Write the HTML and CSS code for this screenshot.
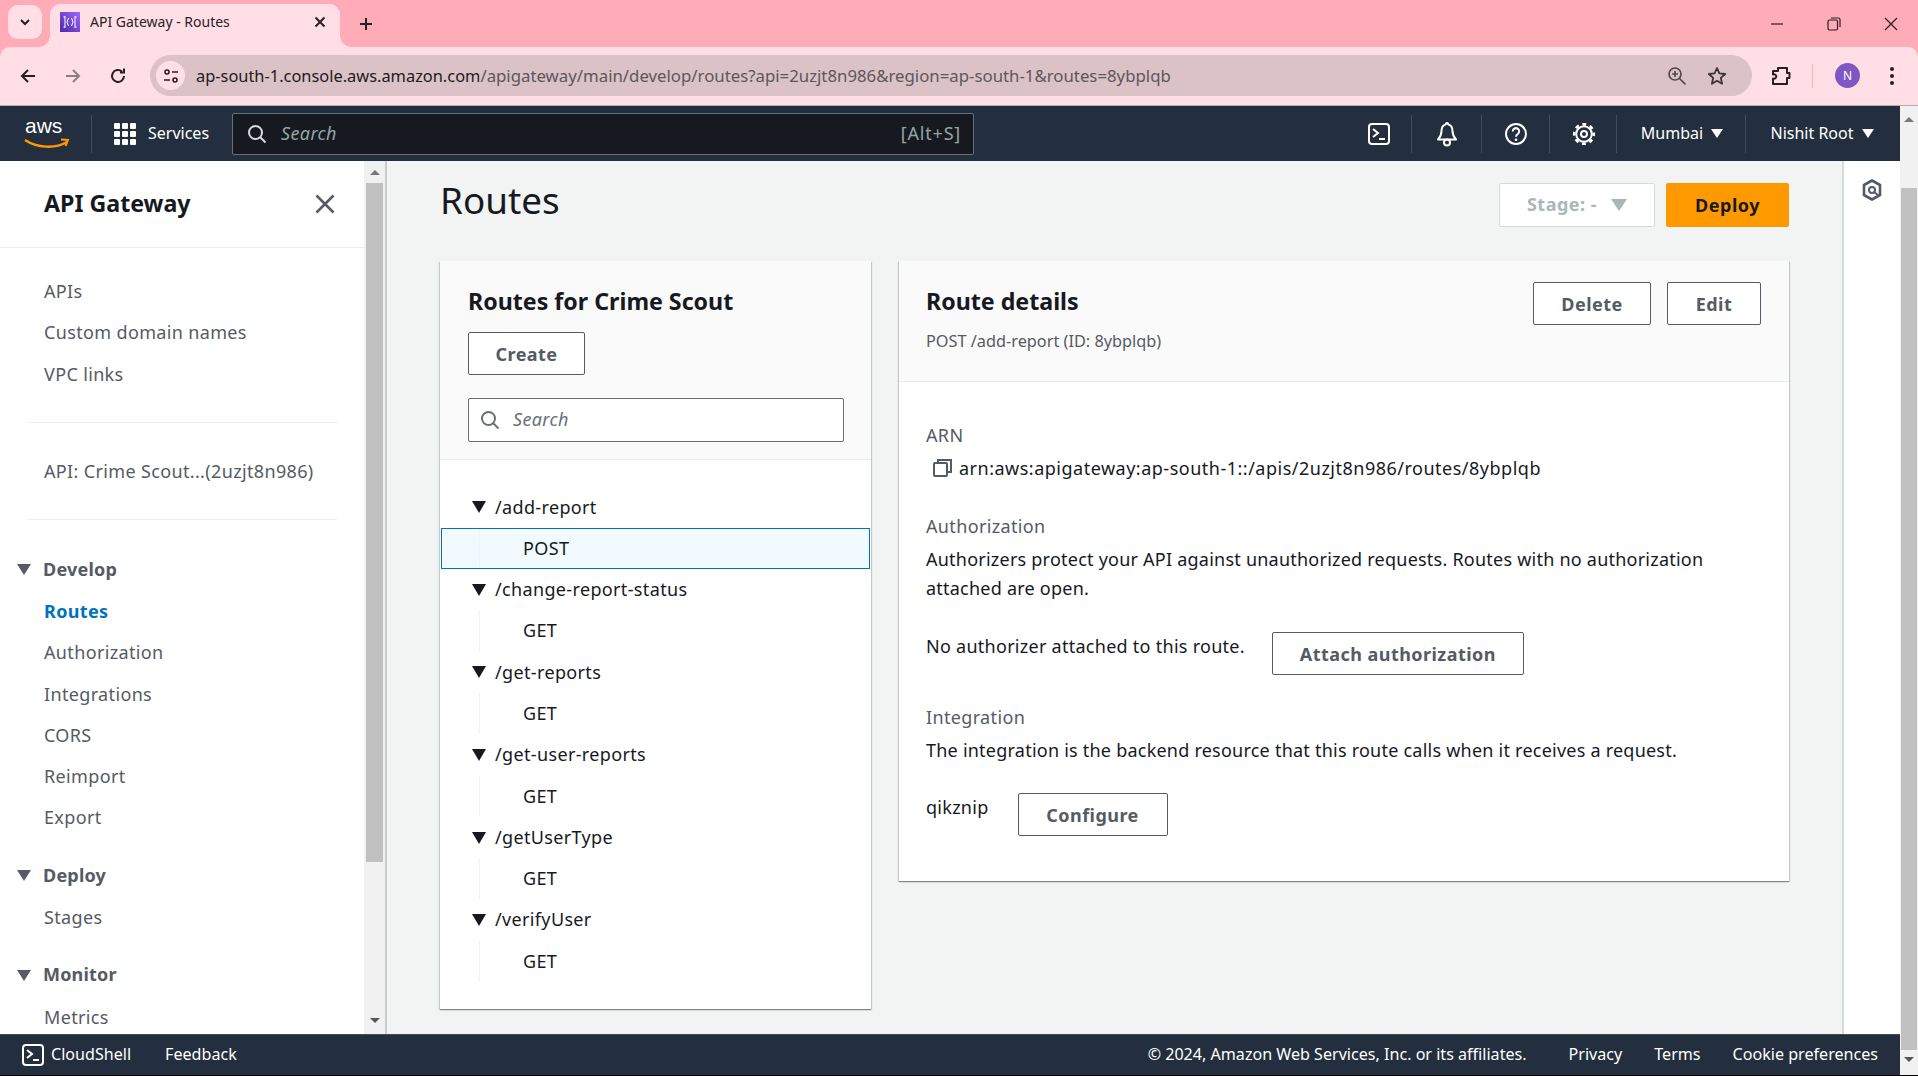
FILE: index.html
```html
<!DOCTYPE html>
<html lang="en">
<head>
  <meta charset="UTF-8" />
  <title>API Gateway - Routes</title>
  <link rel="stylesheet" href="styles.css">
</head>
<body>
  <!-- browser tabs -->
  <div class="tabstrip">
    <div class="tab-list-btn">
      <svg width="14" height="14" viewBox="0 0 14 14"><path d="M3 5l4 4 4-4" fill="none" stroke="#222" stroke-width="2"/></svg>
    </div>
    <div class="tab">
      <svg class="favicon" width="20" height="20" viewBox="0 0 20 20">
        <defs><linearGradient id="fav" x1="0" y1="1" x2="1" y2="0"><stop offset="0" stop-color="#4d27a8"/><stop offset="1" stop-color="#a166ff"/></linearGradient></defs>
        <rect width="20" height="20" fill="url(#fav)"/>
        <path d="M5 4v12M15 4v12M3.500 5h1.500M3.500 15h1.500M15 5h1.500M15 15h1.500M8.500 6l-1.500 4 1.500 4M11.500 6l1.500 4-1.500 4" fill="none" stroke="#fff" stroke-width="1"/>
      </svg>
      <span class="tab-title">API Gateway - Routes</span>
      <svg class="tab-close" width="12" height="12" viewBox="0 0 12 12"><path d="M1.500 1.500l9 9M10.500 1.500l-9 9" stroke="#222" stroke-width="2"/></svg>
    </div>
    <svg class="new-tab" width="14" height="14" viewBox="0 0 14 14"><path d="M7 1v12M1 7h12" stroke="#222" stroke-width="2"/></svg>
    <div class="window-btns">
      <svg width="14" height="14" viewBox="0 0 14 14"><path d="M1 7h12" stroke="#222" stroke-width="1.200"/></svg>
      <svg width="14" height="14" viewBox="0 0 14 14"><rect x="1" y="3" width="9.500" height="10" rx="1.500" fill="none" stroke="#222" stroke-width="1.200"/><path d="M4 1h7.500a1.500 1.500 0 0 1 1.500 1.500V10" fill="none" stroke="#222" stroke-width="1.200"/></svg>
      <svg width="14" height="14" viewBox="0 0 14 14"><path d="M1 1l12 12M13 1L1 13" stroke="#222" stroke-width="1.200"/></svg>
    </div>
  </div>

  <!-- browser toolbar -->
  <div class="toolbar">
    <svg class="tool-icon" width="18" height="18" viewBox="0 0 18 18"><path d="M16 9H3M9 3L3 9l6 6" fill="none" stroke="#222" stroke-width="2"/></svg>
    <svg class="tool-icon" width="18" height="18" viewBox="0 0 18 18"><path d="M2 9h13M9 3l6 6-6 6" fill="none" stroke="#8d7f82" stroke-width="2"/></svg>
    <svg class="tool-icon" width="18" height="18" viewBox="0 0 18 18"><path d="M15 9a6 6 0 1 1-2-4.500M15 1.500v4h-4" fill="none" stroke="#222" stroke-width="2"/></svg>
    <div class="address">
      <div class="site-info">
        <svg width="18" height="18" viewBox="0 0 18 18"><circle cx="5" cy="5" r="2" fill="none" stroke="#222" stroke-width="1.600"/><path d="M10 5h6M2 13h6" stroke="#222" stroke-width="1.600"/><circle cx="13" cy="13" r="2" fill="none" stroke="#222" stroke-width="1.600"/></svg>
      </div>
      <div class="url"><span class="url-host">ap-south-1.console.aws.amazon.com</span>/apigateway/main/develop/routes?api=2uzjt8n986&amp;region=ap-south-1&amp;routes=8ybplqb</div>
      <svg class="zoom-icon" width="20" height="20" viewBox="0 0 20 20"><circle cx="8" cy="8" r="6" fill="none" stroke="#55494c" stroke-width="1.700"/><path d="M12.500 12.500l6 6M5 8h6M8 5v6" stroke="#55494c" stroke-width="1.700"/></svg>
      <svg class="star-icon" width="20" height="20" viewBox="0 0 20 20"><path d="M10 2l2.400 5.400 5.800.6-4.400 3.900 1.300 5.800L10 14.700l-5.100 3 1.300-5.800L1.800 8l5.800-.6z" fill="none" stroke="#3c3436" stroke-width="1.800" stroke-linejoin="round"/></svg>
    </div>
    <svg class="ext-icon" width="22" height="22" viewBox="0 0 22 22"><path d="M8 3h9v5h2.500v5H17v6H3v-5.500c2 .5 3.200-.5 3.200-2S5 9 3 9.500V6h5z" fill="none" stroke="#222" stroke-width="2" stroke-linejoin="round"/></svg>
    <div class="tool-sep"></div>
    <div class="avatar">N</div>
    <svg class="menu-icon" width="6" height="20" viewBox="0 0 6 20"><circle cx="3" cy="3" r="2" fill="#222"/><circle cx="3" cy="10" r="2" fill="#222"/><circle cx="3" cy="17" r="2" fill="#222"/></svg>
  </div>

  <div class="viewport">
    <div class="app">
      <!-- aws top nav -->
      <nav class="topnav">
        <svg class="aws-logo" width="46" height="38" viewBox="0 0 46 38">
          <text x="1" y="18" class="aws-word">aws</text>
          <path d="M1 25c12 8 30 9 42 2" fill="none" stroke="#f90" stroke-width="2.400"/>
          <path d="M37 24.500l7 .5-2.500 6" fill="none" stroke="#f90" stroke-width="2"/>
        </svg>
        <div class="logo-sep"></div>
        <svg class="grid-icon" width="22" height="22" viewBox="0 0 22 22" fill="#fff">
          <rect width="6" height="6" rx="1"/><rect x="8" width="6" height="6" rx="1"/><rect x="16" width="6" height="6" rx="1"/>
          <rect y="8" width="6" height="6" rx="1"/><rect x="8" y="8" width="6" height="6" rx="1"/><rect x="16" y="8" width="6" height="6" rx="1"/>
          <rect y="16" width="6" height="6" rx="1"/><rect x="8" y="16" width="6" height="6" rx="1"/><rect x="16" y="16" width="6" height="6" rx="1"/>
        </svg>
        <span class="services">Services</span>
        <div class="nav-search">
          <svg width="20" height="20" viewBox="0 0 20 20"><circle cx="8.500" cy="8.500" r="6.500" fill="none" stroke="#d5dbdb" stroke-width="2"/><path d="M13 13l5.500 5.500" stroke="#d5dbdb" stroke-width="2"/></svg>
          <span class="nav-search-text">Search</span>
          <span class="nav-search-key">[Alt+S]</span>
        </div>
        <div class="nav-right">
          <div class="nav-item nav-w67 nudge">
            <svg width="22" height="22" viewBox="0 0 22 22"><rect x="1" y="1" width="20" height="20" rx="3" fill="none" stroke="#fff" stroke-width="2"/><path d="M5 6l5 4-5 4M11 16h6" fill="none" stroke="#fff" stroke-width="2"/></svg>
          </div>
          <div class="nav-item nav-w70">
            <svg width="24" height="26" viewBox="0 0 24 26"><path d="M12 2a1.200 1.200 0 0 1 1.200 1.400c3 .8 4.300 3.500 4.300 6.600 0 3.500 1.300 6 3.500 8.500H3c2.200-2.500 3.500-5 3.500-8.500 0-3.100 1.300-5.800 4.300-6.600A1.200 1.200 0 0 1 12 2z" fill="none" stroke="#fff" stroke-width="2" stroke-linejoin="round"/><circle cx="12" cy="21.500" r="3" fill="none" stroke="#fff" stroke-width="2"/></svg>
          </div>
          <div class="nav-item nav-w68">
            <svg width="22" height="22" viewBox="0 0 22 22"><circle cx="11" cy="11" r="10" fill="none" stroke="#fff" stroke-width="2"/><path d="M7.800 8.500A3.200 3.200 0 1 1 12.800 11c-1.300.8-1.800 1.300-1.800 2.800" fill="none" stroke="#fff" stroke-width="2"/><circle cx="11" cy="16.700" r="1.300" fill="#fff"/></svg>
          </div>
          <div class="nav-item nav-w67 nudge">
            <svg width="24" height="24" viewBox="0 0 24 24"><circle cx="12" cy="12" r="9.800" fill="none" stroke="#fff" stroke-width="2.600" stroke-dasharray="3.850 3.850" stroke-dashoffset="1.900"/><circle cx="12" cy="12" r="7.800" fill="none" stroke="#fff" stroke-width="2"/><circle cx="12" cy="12" r="3" fill="none" stroke="#fff" stroke-width="2"/></svg>
          </div>
          <div class="nav-item nav-region nudge">Mumbai <i class="caret-white"></i></div>
          <div class="nav-item nav-user">Nishit Root <i class="caret-white"></i></div>
        </div>
      </nav>

      <div class="body-row">
        <!-- side navigation -->
        <aside class="sidebar">
          <div class="side-head">
            <span class="side-title">API Gateway</span>
            <svg width="20" height="20" viewBox="0 0 20 20"><path d="M1.500 1.500l17 17M18.500 1.500l-17 17" stroke="#545b64" stroke-width="2.500"/></svg>
          </div>
          <div class="side-block first">
            <a class="side-link">APIs</a>
            <a class="side-link">Custom domain names</a>
            <a class="side-link">VPC links</a>
          </div>
          <div class="side-rule"></div>
          <div class="side-block">
            <a class="side-link">API: Crime Scout...(2uzjt8n986)</a>
          </div>
          <div class="side-rule rule-b"></div>
          <div class="side-section first"><i class="caret-gray"></i>Develop</div>
          <a class="side-link active">Routes</a>
          <a class="side-link">Authorization</a>
          <a class="side-link">Integrations</a>
          <a class="side-link">CORS</a>
          <a class="side-link">Reimport</a>
          <a class="side-link">Export</a>
          <div class="side-section"><i class="caret-gray"></i>Deploy</div>
          <a class="side-link stages">Stages</a>
          <div class="side-section"><i class="caret-gray"></i>Monitor</div>
          <a class="side-link metrics">Metrics</a>
        </aside>
        <div class="side-scroll">
          <i class="arrow-up"></i>
          <div class="side-thumb"></div>
          <i class="arrow-down"></i>
        </div>

        <main class="content">
          <div class="page-head">
            <h1>Routes</h1>
            <div class="page-actions">
              <div class="stage-btn">Stage: - <i class="caret-light"></i></div>
              <div class="deploy-btn">Deploy</div>
            </div>
          </div>

          <div class="cards">
            <section class="card routes-card">
              <div class="routes-head">
                <h2>Routes for Crime Scout</h2>
                <div class="btn create-btn">Create</div>
                <div class="route-search">
                  <svg width="20" height="20" viewBox="0 0 20 20"><circle cx="8.500" cy="8.500" r="6.500" fill="none" stroke="#687078" stroke-width="2"/><path d="M13 13l5.500 5.500" stroke="#687078" stroke-width="2"/></svg>
                  <span>Search</span>
                </div>
              </div>
              <div class="tree">
                <div class="tree-path"><i class="caret-dark"></i>/add-report</div>
                <div class="tree-method selected"><span class="guide">POST</span></div>
                <div class="tree-path"><i class="caret-dark"></i>/change-report-status</div>
                <div class="tree-method"><span class="guide">GET</span></div>
                <div class="tree-path"><i class="caret-dark"></i>/get-reports</div>
                <div class="tree-method"><span class="guide">GET</span></div>
                <div class="tree-path"><i class="caret-dark"></i>/get-user-reports</div>
                <div class="tree-method"><span class="guide">GET</span></div>
                <div class="tree-path"><i class="caret-dark"></i>/getUserType</div>
                <div class="tree-method"><span class="guide">GET</span></div>
                <div class="tree-path"><i class="caret-dark"></i>/verifyUser</div>
                <div class="tree-method"><span class="guide">GET</span></div>
              </div>
            </section>

            <section class="card details-card">
              <div class="details-head">
                <div>
                  <h2>Route details</h2>
                  <div class="details-sub">POST /add-report (ID: 8ybplqb)</div>
                </div>
                <div class="details-actions">
                  <div class="btn delete-btn">Delete</div>
                  <div class="btn edit-btn">Edit</div>
                </div>
              </div>
              <div class="details-body">
                <div class="label">ARN</div>
                <div class="arn">
                  <svg width="20" height="20" viewBox="0 0 20 20"><rect x="1" y="5" width="13" height="13" rx="1" fill="none" stroke="#545b64" stroke-width="2"/><path d="M5 5V2h13v12h-4" fill="none" stroke="#545b64" stroke-width="2"/></svg>
                  <span>arn:aws:apigateway:ap-south-1::/apis/2uzjt8n986/routes/8ybplqb</span>
                </div>
                <div class="label gap-label">Authorization</div>
                <p class="desc">Authorizers protect your API against unauthorized requests. Routes with no authorization attached are open.</p>
                <div class="action-row">
                  <span class="action-text">No authorizer attached to this route.</span>
                  <div class="btn attach-btn">Attach authorization</div>
                </div>
                <div class="label gap-label-sm">Integration</div>
                <p class="desc desc-int">The integration is the backend resource that this route calls when it receives a request.</p>
                <div class="action-row row-int">
                  <span class="action-text">qikznip</span>
                  <div class="btn configure-btn">Configure</div>
                </div>
              </div>
            </section>
          </div>
        </main>

        <div class="rail">
          <svg width="20" height="22" viewBox="0 0 20 22"><path d="M10 1.500l8 4.500v10l-8 4.500L2 16V6z" fill="none" stroke="#545b64" stroke-width="2.600" stroke-linejoin="round"/><circle cx="10" cy="11" r="3" fill="none" stroke="#545b64" stroke-width="2"/><path d="M12 13l4 3" stroke="#545b64" stroke-width="2"/></svg>
        </div>
      </div>

      <footer class="footer">
        <svg width="22" height="22" viewBox="0 0 22 22"><rect x="1" y="1" width="20" height="20" rx="3" fill="none" stroke="#fff" stroke-width="2"/><path d="M5 6l5 4-5 4M11 16h6" fill="none" stroke="#fff" stroke-width="2"/></svg>
        <span class="foot-shell">CloudShell</span>
        <span class="foot-feedback">Feedback</span>
        <div class="foot-right">
          <span class="foot-copy">© 2024, Amazon Web Services, Inc. or its affiliates.</span>
          <span>Privacy</span>
          <span>Terms</span>
          <span>Cookie preferences</span>
        </div>
      </footer>
    </div>

    <div class="page-scroll">
      <i class="arrow-up"></i>
      <div class="page-thumb"></div>
      <i class="arrow-down"></i>
    </div>
  </div>
</body>
</html>
```

FILE: styles.css
```css
* {
  box-sizing: border-box;
}
html, body {
  margin: 0;
  height: 100%;
  overflow: hidden;
}
body {
  display: flex;
  flex-direction: column;
  font-family: "Noto Sans", "Open Sans", sans-serif;
  font-size: 18px;
  line-height: 27.5px;
  color: #16191f;
  background: #ffabb8;
}

/* browser chrome */
.tabstrip {
  height: 47px;
  flex: none;
  display: flex;
  align-items: flex-end;
  background: #ffabb8;
}
.tab-list-btn {
  width: 34px;
  height: 34px;
  margin: 0 0 8px 8px;
  border-radius: 10px;
  background: #ffdfe5;
  display: flex;
  align-items: center;
  justify-content: center;
}
.tab {
  position: relative;
  width: 290px;
  height: 43px;
  margin-left: 8px;
  padding: 0 14px 7px 10px;
  border-radius: 11px 11px 0 0;
  background: #ffdfe5;
  display: flex;
  align-items: center;
}
.tab::before,
.tab::after {
  content: "";
  position: absolute;
  bottom: 0;
  width: 11px;
  height: 11px;
}
.tab::before {
  left: -11px;
  background: radial-gradient(circle at 0 0, #ffabb8 10.5px, #ffdfe5 11px);
}
.tab::after {
  right: -11px;
  background: radial-gradient(circle at 100% 0, #ffabb8 10.5px, #ffdfe5 11px);
}
.favicon {
  flex: none;
}
.tab-title {
  flex: 1;
  margin-left: 10px;
  font-size: 14px;
  color: #2a2326;
}
.new-tab {
  margin: 0 0 16px 19px;
}
.window-btns {
  margin: 0 20px 16px auto;
  display: flex;
  gap: 43px;
}
.toolbar {
  height: 59px;
  flex: none;
  display: flex;
  align-items: center;
  padding: 0 0 1px 19px;
  background: #ffdfe5;
  border-bottom: 1px solid #b9a8ac;
  border-radius: 10px 10px 0 0;
}
.tool-icon {
  margin-right: 27px;
}
.tool-icon:nth-child(3) {
  margin-right: 23px;
}
.address {
  width: 1602px;
  height: 41px;
  display: flex;
  align-items: center;
  padding: 0 25px 0 6px;
  border-radius: 21px;
  background: #dac2c6;
}
.site-info {
  width: 29px;
  height: 29px;
  border-radius: 50%;
  background: #ffdfe5;
  display: flex;
  align-items: center;
  justify-content: center;
}
.url {
  flex: 1;
  margin-left: 11px;
  font-size: 16.800px;
  white-space: nowrap;
  color: #60565a;
}
.url-host {
  font-size: 16.400px;
  color: #1f1a1c;
}
.zoom-icon {
  margin-right: 20px;
}
.ext-icon {
  margin-left: 18px;
}
.tool-sep {
  width: 1px;
  height: 24px;
  margin: 0 22px 0 20px;
  background: #ffabb8;
}
.avatar {
  width: 25px;
  height: 25px;
  border-radius: 50%;
  background: #7e57c2;
  color: #fff;
  font-size: 12px;
  line-height: 25px;
  text-align: center;
}
.menu-icon {
  margin-left: 29px;
}

/* page frame */
.viewport {
  flex: 1;
  min-height: 0;
  display: flex;
  background: #000;
  padding-bottom: 1px;
}
.app {
  width: 1900px;
  display: flex;
  flex-direction: column;
  letter-spacing: 0.35px;
}
.page-scroll {
  width: 18px;
  background: #f1f1f1;
  display: flex;
  flex-direction: column;
  align-items: center;
}
.page-scroll .arrow-up {
  margin-top: 11px;
}
.page-thumb {
  width: 16px;
  height: 862px;
  margin: 66px 0 7px;
  background: #c1c1c1;
}
.arrow-up {
  width: 0;
  height: 0;
  border: 5px solid transparent;
  border-top: 0;
  border-bottom: 5px solid #777;
}
.arrow-down {
  width: 0;
  height: 0;
  border: 5px solid transparent;
  border-bottom: 0;
  border-top: 5px solid #555;
}

/* aws nav */
.topnav {
  height: 55px;
  flex: none;
  display: flex;
  align-items: center;
  padding-left: 24px;
  background: #232f3e;
  color: #fff;
}
.aws-word {
  font-family: "Liberation Sans", sans-serif;
  font-size: 21px;
  letter-spacing: 0;
  fill: #fff;
}
.logo-sep {
  width: 1px;
  height: 38px;
  margin: 0 22px 0 21px;
  background: #414d5c;
}
.services {
  margin-left: 12px;
  font-size: 16px;
  letter-spacing: 0;
}
.nav-search {
  width: 742px;
  height: 42px;
  margin-left: 23px;
  padding: 0 12px 0 14px;
  display: flex;
  align-items: center;
  background: #16191f;
  border: 1px solid #687078;
  border-radius: 2px;
}
.nav-search-text {
  margin-left: 14px;
  font-style: italic;
  color: #95a5a6;
}
.nav-search-key {
  margin-left: auto;
  letter-spacing: 0.8px;
  color: #95a5a6;
}
.nav-right {
  margin-left: auto;
  display: flex;
  align-items: center;
}
.nav-item {
  height: 38px;
  display: flex;
  align-items: center;
  justify-content: center;
  border-left: 1px solid #414d5c;
  font-size: 16px;
  letter-spacing: 0;
}
.nav-item:first-child {
  border-left: 0;
}
.nudge {
  padding-left: 2px;
}
.nav-w70 { width: 70px; }
.nav-w68 { width: 68px; }
.nav-w67 { width: 67px; }
.nav-region { width: 129px; gap: 8px; }
.nav-user { width: 155px; gap: 8px; padding-right: 2px; }
.caret-white {
  width: 0;
  height: 0;
  border: 6px solid transparent;
  border-bottom: 0;
  border-top: 9px solid #fff;
}

/* layout under the nav */
.body-row {
  flex: 1;
  min-height: 0;
  display: flex;
  background: #f2f3f3;
}
.sidebar {
  width: 364px;
  flex: none;
  background: #fff;
  overflow: hidden;
}
.side-head {
  height: 87px;
  padding: 0 29px 0 44px;
  display: flex;
  align-items: center;
  justify-content: space-between;
  border-bottom: 1px solid #eaeded;
}
.side-title {
  font-size: 23.200px;
  font-weight: 700;
  letter-spacing: 0;
}
.side-block.first {
  margin-top: 23px;
}
.side-link {
  display: block;
  padding-left: 44px;
  line-height: 41.3px;
  color: #545b64;
}
.side-link.active {
  color: #0073bb;
  font-weight: 700;
}
.side-rule {
  height: 1px;
  margin: 27px 27px 28px 28px;
  background: #eaeded;
}
.side-rule.rule-b {
  margin-bottom: 0;
}
.side-section {
  margin-top: 16px;
  display: flex;
  align-items: center;
  padding-left: 17px;
  line-height: 41.3px;
  font-weight: 700;
  letter-spacing: 0.2px;
  color: #545b64;
}
.side-section.first {
  margin-top: 28.500px;
  margin-bottom: 1px;
}
.stages {
  margin-top: 1px;
}
.metrics {
  margin-top: 1px;
}
.caret-gray {
  width: 0;
  height: 0;
  margin-right: 12px;
  border: 7px solid transparent;
  border-bottom: 0;
  border-top: 11px solid #545b64;
}
.side-scroll {
  width: 23px;
  flex: none;
  padding: 0 1px;
  background: #f1f1f1;
  border-right: 2px solid #c8cdcd;
  display: flex;
  flex-direction: column;
  align-items: center;
}
.side-scroll .arrow-up {
  margin-top: 9px;
}
.side-thumb {
  width: 17px;
  height: 679px;
  margin: 8px 0 156px;
  background: #c1c1c1;
}

/* main content */
.content {
  flex: 1;
  min-width: 0;
  padding: 0 53px 0 53px;
}
.page-head {
  height: 100px;
  padding-top: 17px;
  display: flex;
  justify-content: space-between;
}
h1 {
  margin: 0;
  font-size: 36.800px;
  font-weight: 400;
  line-height: 44px;
  letter-spacing: 0;
}
.page-actions {
  display: flex;
  gap: 11px;
  margin-top: 5px;
}
.stage-btn {
  width: 156px;
  height: 44px;
  display: flex;
  align-items: center;
  justify-content: center;
  gap: 14px;
  background: #fff;
  border: 1px solid #d5dbdb;
  border-radius: 2px;
  font-weight: 700;
  letter-spacing: 0.5px;
  color: #aab7b8;
}
.caret-light {
  width: 0;
  height: 0;
  border: 8px solid transparent;
  border-bottom: 0;
  border-top: 12px solid #aab7b8;
}
.deploy-btn {
  width: 123px;
  height: 44px;
  background: #ff9900;
  border-radius: 2px;
  line-height: 44px;
  text-align: center;
  font-weight: 700;
  letter-spacing: 0.5px;
}
.cards {
  display: flex;
  align-items: flex-start;
  gap: 28px;
}
.card {
  background: #fff;
  box-shadow: 0 1px 1px rgba(0,28,36,0.3), 1px 1px 1px rgba(0,28,36,0.15), -1px 1px 1px rgba(0,28,36,0.15);
}
.routes-card {
  width: 431px;
  flex: none;
}
.details-card {
  flex: 1;
}
h2 {
  margin: 0;
  font-size: 23.200px;
  font-weight: 700;
  line-height: 28px;
  letter-spacing: 0;
}
.btn {
  height: 43px;
  background: #fff;
  border: 1px solid #545b64;
  border-radius: 2px;
  line-height: 42px;
  text-align: center;
  font-weight: 700;
  letter-spacing: 0.45px;
  color: #545b64;
}
.routes-head {
  height: 199px;
  padding: 26px 27px 0 28px;
  background: #fafafa;
  border-bottom: 1px solid #eaeded;
}
.create-btn {
  width: 117px;
  margin-top: 17px;
}
.route-search {
  height: 44px;
  margin-top: 23px;
  padding: 0 11px;
  display: flex;
  align-items: center;
  gap: 13px;
  background: #fff;
  border: 1px solid #687078;
  border-radius: 2px;
  font-style: italic;
  color: #687078;
}
.tree {
  padding: 26.500px 1px 26.500px;
}
.tree-path,
.tree-method {
  height: 41.3px;
  line-height: 41.3px;
}
.tree-path {
  display: flex;
  align-items: center;
  padding-left: 31px;
}
.caret-dark {
  width: 0;
  height: 0;
  margin-right: 9px;
  border: 7.500px solid transparent;
  border-bottom: 0;
  border-top: 12px solid #16191f;
}
.tree-method {
  padding-left: 38px;
}
.guide {
  display: block;
  height: 100%;
  padding-left: 43px;
  border-left: 1px solid #f2f3f3;
}
.tree-method.selected {
  background: #f1faff;
  outline: 1px solid #0073bb;
  outline-offset: -1px;
}
.details-head {
  height: 121px;
  padding: 26px 28px 0 27px;
  display: flex;
  justify-content: space-between;
  background: #fafafa;
  border-bottom: 1px solid #eaeded;
}
.details-sub {
  margin-top: 13px;
  font-size: 16.300px;
  letter-spacing: 0;
  color: #545b64;
}
.details-actions {
  display: flex;
  gap: 16px;
  margin-top: -5px;
}
.delete-btn {
  width: 118px;
}
.edit-btn {
  width: 94px;
}
.details-body {
  padding: 40px 28px 45px 27px;
}
.label {
  color: #545b64;
}
.arn {
  margin-top: 5px;
  padding-left: 7px;
  display: flex;
  align-items: center;
  gap: 6px;
  letter-spacing: 0.5px;
}
.gap-label {
  margin-top: 31px;
}
.gap-label-sm {
  margin-top: 29px;
}
.desc {
  margin: 4px 0 0;
  line-height: 29px;
  letter-spacing: 0.23px;
}
.desc-int {
  margin-top: 5px;
}
.action-row {
  margin-top: 29px;
  display: flex;
  align-items: flex-start;
  gap: 27px;
}
.row-int {
  margin-top: 28px;
  gap: 29px;
}
.action-text {
  padding-top: 1px;
  letter-spacing: 0.27px;
}
.attach-btn {
  width: 252px;
}
.configure-btn {
  width: 150px;
}
.rail {
  width: 58px;
  flex: none;
  padding-top: 18px;
  display: flex;
  justify-content: center;
  align-items: flex-start;
  background: #fff;
  border-left: 2px solid #d5dbdb;
}

/* footer */
.footer {
  height: 41px;
  flex: none;
  display: flex;
  align-items: center;
  padding: 0 22px;
  background: #232f3e;
  border-top: 1px solid #414d5c;
  color: #fff;
  font-size: 16.100px;
  letter-spacing: 0;
}
.foot-shell {
  margin-left: 7px;
}
.foot-feedback {
  margin-left: 34px;
}
.foot-right {
  margin-left: auto;
  display: flex;
  gap: 32px;
}
.foot-copy {
  margin-right: 10px;
}
```
